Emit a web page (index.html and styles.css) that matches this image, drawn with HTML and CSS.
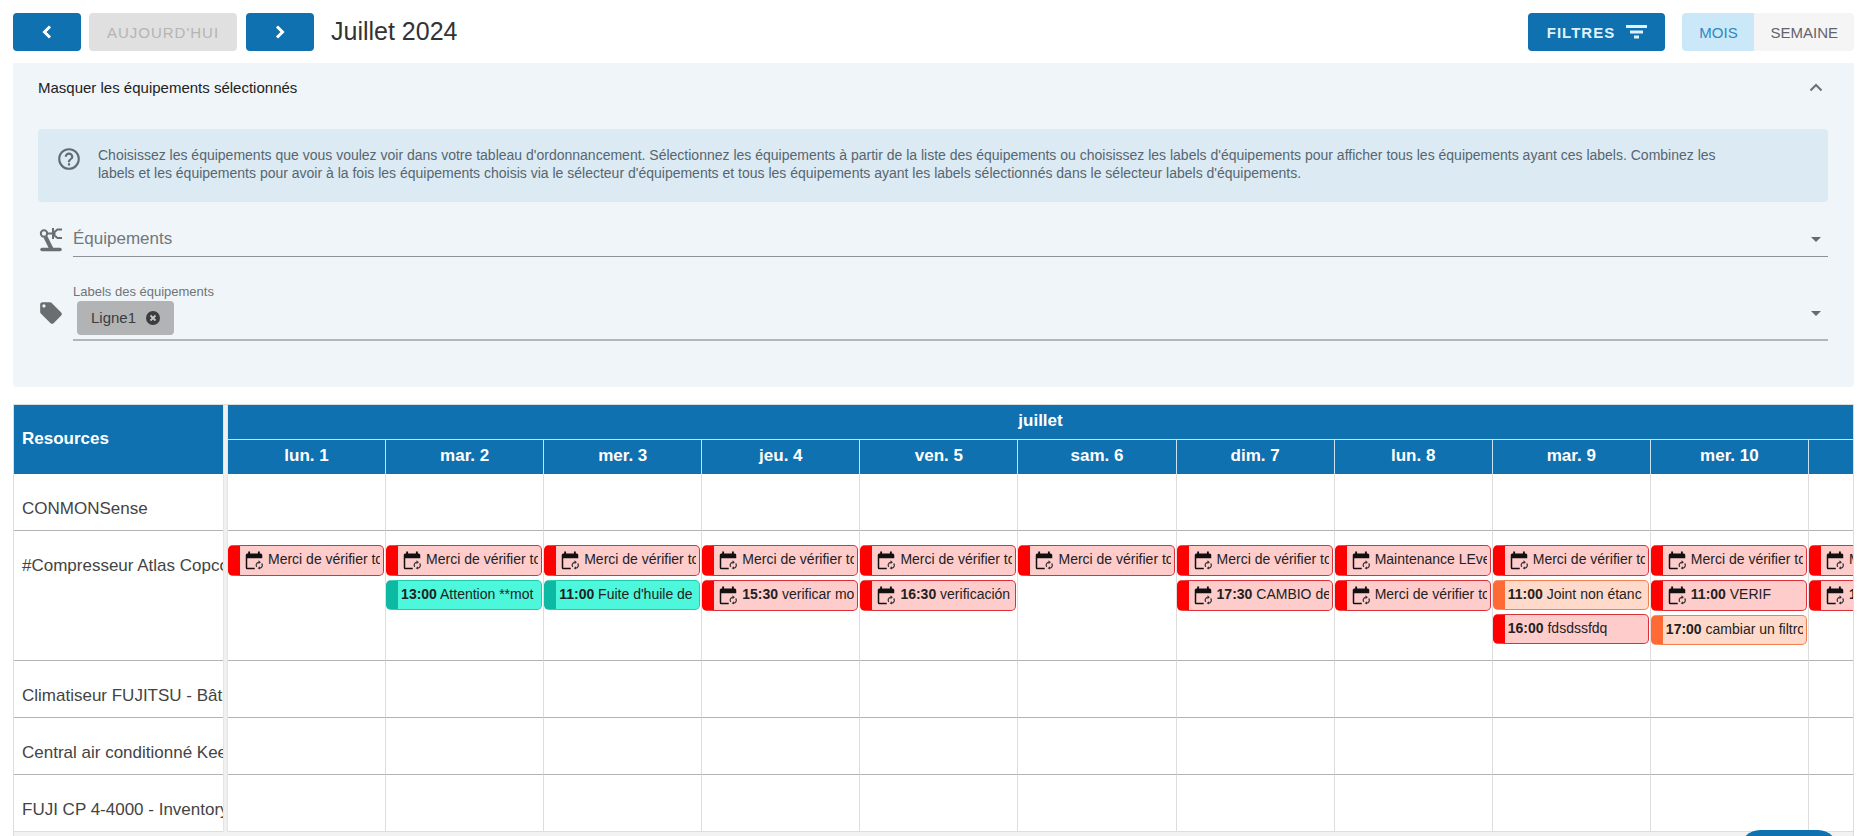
FILE: index.html
```html
<!DOCTYPE html>
<html lang="fr">
<head>
    <meta charset="UTF-8">
    <meta name="viewport" content="width=device-width, initial-scale=1.0">
    <title>Ordonnancement</title>
    <link rel="stylesheet" href="styles.css">
</head>
<body>
    <!-- shared icons -->
    <svg class="sprite" aria-hidden="true">
        <symbol id="calendar" viewBox="0 0 24 24">
            <path d="M5.5 0v4M18.500 0v4" fill="none" stroke="#111" stroke-width="2.500"/>
            <path d="M3 2.500h18a2 2 0 0 1 2 2V9H3v12.500h10V23.500H3a2 2 0 0 1-2-2V4.500a2 2 0 0 1 2-2z" fill="#111"/>
            <path d="M15.800 20.500a3.800 3.800 0 0 1 2.700-6.200M22.200 16a3.800 3.800 0 0 1-2.700 6.200" fill="none" stroke="#333" stroke-width="1.600"/>
            <path d="M18 11.500l3.200 2.800-3.200 2.700zM20 19.500l-3.200 2.700 3.200 1.800z" fill="#333"/>
        </symbol>
    </svg>

    <div class="toolbar">
        <button class="btn nav" aria-label="Précédent">
            <svg width="12" height="14" viewBox="0 0 12 14"><path d="M9 1.5L3.500 7L9 12.500" fill="none" stroke="#fff" stroke-width="3"/></svg>
        </button>
        <button class="btn today" disabled>AUJOURD'HUI</button>
        <button class="btn nav" aria-label="Suivant">
            <svg width="12" height="14" viewBox="0 0 12 14"><path d="M3 1.500L8.500 7L3 12.500" fill="none" stroke="#fff" stroke-width="3"/></svg>
        </button>
        <h1>Juillet 2024</h1>
        <button class="btn filters">FILTRES
            <svg width="21" height="16" viewBox="0 0 21 16"><path d="M0 2.500h21M4 8h13M8 13h5" fill="none" stroke="#dff1fc" stroke-width="3"/></svg>
        </button>
        <div class="views">
            <button class="active">MOIS</button>
            <button>SEMAINE</button>
        </div>
    </div>

    <section class="panel">
        <div class="panel-header">
            <span>Masquer les équipements sélectionnés</span>
            <button class="collapse" aria-label="Replier">
                <svg width="14" height="9" viewBox="0 0 14 9"><path d="M1.500 7.500L7 2l5.500 5.500" fill="none" stroke="#6b7073" stroke-width="2"/></svg>
            </button>
        </div>
        <div class="info">
            <svg width="26" height="26" viewBox="0 0 24 24" fill="#5f6c74"><path d="M11,18H13V16H11V18M12,2A10,10 0 0,0 2,12A10,10 0 0,0 12,22A10,10 0 0,0 22,12A10,10 0 0,0 12,2M12,20C7.59,20 4,16.41 4,12C4,7.59 7.59,4 12,4C16.41,4 20,7.59 20,12C20,16.41 16.41,20 12,20M12,6A4,4 0 0,0 8,10H10A2,2 0 0,1 12,8A2,2 0 0,1 14,10C14,12 11,11.75 11,15H13C13,12.75 16,12.5 16,10A4,4 0 0,0 12,6Z"/></svg>
            <p>Choisissez les équipements que vous voulez voir dans votre tableau d'ordonnancement. Sélectionnez les équipements à partir de la liste des équipements ou choisissez les labels d'équipements pour afficher tous les équipements ayant ces labels. Combinez les labels et les équipements pour avoir à la fois les équipements choisis via le sélecteur d'équipements et tous les équipements ayant les labels sélectionnés dans le sélecteur labels d'équipements.</p>
        </div>

        <div class="field">
            <!-- robot arm -->
            <svg class="field-icon" width="26" height="26" viewBox="0 0 26 26" fill="none" stroke="#6a6e70">
                <circle cx="6" cy="6.500" r="3.200" stroke-width="2"/>
                <path d="M9.500 6.500H15M24 2.500h-4.500L16.500 5v3.500l3 2.500H24M15 1v11" stroke-width="2"/>
                <path d="M7.500 10l6 12" stroke-width="4"/>
                <path d="M4 22.500h18" stroke-width="3.500" stroke-linecap="round"/>
            </svg>
            <div class="select">
                <label for="equipments">Équipements</label>
                <input type="text" id="equipments">
                <span class="arrow"></span>
            </div>
        </div>

        <div class="field labels">
            <svg class="field-icon" width="26" height="26" viewBox="0 0 24 24" fill="#6a6e70"><path d="M5.5,7A1.5,1.5 0 0,1 4,5.5A1.5,1.5 0 0,1 5.5,4A1.5,1.5 0 0,1 7,5.5A1.5,1.5 0 0,1 5.5,7M21.41,11.58L12.41,2.58C12.05,2.22 11.55,2 11,2H4C2.89,2 2,2.89 2,4V11C2,11.55 2.22,12.05 2.59,12.41L11.58,21.41C11.95,21.77 12.45,22 13,22C13.55,22 14.05,21.77 14.41,21.41L21.41,14.41C21.78,14.05 22,13.55 22,13C22,12.44 21.77,11.94 21.41,11.58Z"/></svg>
            <div class="select-box">
                <label for="labels">Labels des équipements</label>
                <div class="select">
                    <span class="chip">Ligne1
                        <button aria-label="Retirer Ligne1">
                            <svg width="14" height="14" viewBox="0 0 14 14"><circle cx="7" cy="7" r="7" fill="#3b3d3e"/><path d="M4.500 4.500l5 5M9.500 4.500l-5 5" stroke="#c4c6c7" stroke-width="1.800"/></svg>
                        </button>
                    </span>
                    <input type="text" id="labels">
                    <span class="arrow"></span>
                </div>
            </div>
        </div>
    </section>

    <div class="scheduler">
        <table>
            <colgroup>
                <col class="col-resource">
                <col class="col-divider">
                <col span="10">
                <col class="col-last">
            </colgroup>
            <thead>
                <tr>
                    <th rowspan="2" class="resource">Resources</th>
                    <td rowspan="2" class="divider"></td>
                    <th colspan="11" class="month">juillet</th>
                </tr>
                <tr>
                    <th>lun. 1</th>
                    <th>mar. 2</th>
                    <th>mer. 3</th>
                    <th>jeu. 4</th>
                    <th>ven. 5</th>
                    <th>sam. 6</th>
                    <th>dim. 7</th>
                    <th>lun. 8</th>
                    <th>mar. 9</th>
                    <th>mer. 10</th>
                    <th></th>
                </tr>
            </thead>
            <tbody>
                <tr>
                    <td class="resource">CONMONSense</td>
                    <td class="divider"></td>
                    <td></td><td></td><td></td><td></td><td></td><td></td><td></td><td></td><td></td><td></td><td></td>
                </tr>
                <tr class="busy">
                    <td class="resource">#Compresseur Atlas Copco</td>
                    <td class="divider"></td>
                    <td>
                        <div class="event red"><svg><use href="#calendar"/></svg><span>Merci de vérifier to</span></div>
                    </td>
                    <td>
                        <div class="event red"><svg><use href="#calendar"/></svg><span>Merci de vérifier to</span></div>
                        <div class="event teal"><span><b>13:00</b> Attention **mot</span></div>
                    </td>
                    <td>
                        <div class="event red"><svg><use href="#calendar"/></svg><span>Merci de vérifier to</span></div>
                        <div class="event teal"><span><b>11:00</b> Fuite d'huile de</span></div>
                    </td>
                    <td>
                        <div class="event red"><svg><use href="#calendar"/></svg><span>Merci de vérifier to</span></div>
                        <div class="event red"><svg><use href="#calendar"/></svg><span><b>15:30</b> verificar mo</span></div>
                    </td>
                    <td>
                        <div class="event red"><svg><use href="#calendar"/></svg><span>Merci de vérifier to</span></div>
                        <div class="event red"><svg><use href="#calendar"/></svg><span><b>16:30</b> verificación</span></div>
                    </td>
                    <td>
                        <div class="event red"><svg><use href="#calendar"/></svg><span>Merci de vérifier to</span></div>
                    </td>
                    <td>
                        <div class="event red"><svg><use href="#calendar"/></svg><span>Merci de vérifier to</span></div>
                        <div class="event red"><svg><use href="#calendar"/></svg><span><b>17:30</b> CAMBIO de</span></div>
                    </td>
                    <td>
                        <div class="event red"><svg><use href="#calendar"/></svg><span>Maintenance LEve</span></div>
                        <div class="event red"><svg><use href="#calendar"/></svg><span>Merci de vérifier to</span></div>
                    </td>
                    <td>
                        <div class="event red"><svg><use href="#calendar"/></svg><span>Merci de vérifier to</span></div>
                        <div class="event orange"><span><b>11:00</b> Joint non étanc</span></div>
                        <div class="event red plain"><span><b>16:00</b> fdsdssfdq</span></div>
                    </td>
                    <td>
                        <div class="event red"><svg><use href="#calendar"/></svg><span>Merci de vérifier to</span></div>
                        <div class="event red"><svg><use href="#calendar"/></svg><span><b>11:00</b> VERIF</span></div>
                        <div class="event orange"><span><b>17:00</b> cambiar un filtro</span></div>
                    </td>
                    <td>
                        <div class="event red cut"><svg><use href="#calendar"/></svg><span>M</span></div>
                        <div class="event red cut"><svg><use href="#calendar"/></svg><span><b>1</b></span></div>
                    </td>
                </tr>
                <tr>
                    <td class="resource">Climatiseur FUJITSU - Bâti</td>
                    <td class="divider"></td>
                    <td></td><td></td><td></td><td></td><td></td><td></td><td></td><td></td><td></td><td></td><td></td>
                </tr>
                <tr>
                    <td class="resource">Central air conditionné Kee</td>
                    <td class="divider"></td>
                    <td></td><td></td><td></td><td></td><td></td><td></td><td></td><td></td><td></td><td></td><td></td>
                </tr>
                <tr>
                    <td class="resource">FUJI CP 4-4000 - Inventory</td>
                    <td class="divider"></td>
                    <td></td><td></td><td></td><td></td><td></td><td></td><td></td><td></td><td></td><td></td><td></td>
                </tr>
            </tbody>
        </table>
    </div>

    <button class="fab" aria-label="Aide"></button>
</body>
</html>
```
FILE: styles.css
```css
* {
    box-sizing: border-box;
}
body {
    margin: 0;
    padding: 13px 5px 0 13px;
    font-family: "Liberation Sans", Arial, sans-serif;
    font-size: 14px;
    color: #333;
    background: #fff;
    height: 100vh;
    overflow: hidden;
}
button {
    font-family: inherit;
    border: none;
    padding: 0;
    cursor: pointer;
}
.sprite {
    display: none;
}

/* Toolbar */
.toolbar {
    display: flex;
    align-items: center;
    height: 38px;
    margin-bottom: 12px;
}
.btn {
    display: flex;
    align-items: center;
    justify-content: center;
    height: 38px;
    border-radius: 4px;
    background: #0f71b0;
    color: #fff;
    font-size: 15px;
    letter-spacing: 1px;
}
.nav {
    width: 68px;
}
.today {
    width: 148px;
    margin: 0 9px 0 8px;
    background: #e0e0e0;
    color: #b4b4b4;
}
.toolbar h1 {
    flex: 1;
    margin: 0 0 0 17px;
    font-size: 25px;
    line-height: 28px;
    padding-bottom: 2px;
    font-weight: normal;
    color: #333;
}
.filters {
    width: 137px;
    gap: 11px;
    margin-right: 17px;
    font-weight: bold;
    color: #dff1fc;
}
.views {
    display: flex;
    height: 38px;
    border-radius: 4px;
    overflow: hidden;
}
.views button {
    min-width: 72px;
    padding: 0 16px;
    font-size: 15px;
    color: #62636c;
    background: #f5f5f5;
}
.views .active {
    color: #2f87c0;
    background: #cbe8f9;
}

/* Equipment filter panel */
.panel {
    padding: 0 26px 46px 25px;
    border-radius: 0 0 4px 4px;
    background: #eff5f9;
}
.panel-header {
    display: flex;
    align-items: center;
    justify-content: space-between;
    height: 48px;
    margin-bottom: 18px;
    font-size: 15px;
    color: #222;
}
.collapse {
    display: flex;
    margin-right: 5px;
    background: none;
}
.info {
    display: flex;
    gap: 16px;
    height: 73px;
    padding: 17px 95px 0 18px;
    border-radius: 4px;
    background: #dceaf4;
    color: #56666f;
}
.info svg {
    flex: none;
}
.info p {
    margin: 0;
    line-height: 18px;
}
.field {
    display: flex;
    align-items: center;
    gap: 9px;
    margin-top: 20px;
}
.field-icon {
    flex: none;
}
.select {
    flex: 1;
    display: flex;
    align-items: center;
    height: 35px;
    padding-right: 7px;
    border-bottom: 1px solid #8d9295;
    font-size: 17px;
    color: #72777a;
}
.select input {
    flex: 1;
    min-width: 0;
    border: none;
    outline: none;
    background: none;
}
.arrow {
    border: 5px solid transparent;
    border-top-color: #666b6e;
    border-bottom: none;
}
.labels {
    margin-top: 27px;
}
.select-box {
    flex: 1;
    font-size: 13px;
    line-height: 16px;
    color: #6f7477;
}
.select-box label {
    display: block;
}
.select-box .select {
    height: 41px;
    padding-bottom: 4px;
    border-bottom: 2px solid #b2b6b8;
}
.select-box .arrow {
    margin-bottom: 8px;
}
.chip {
    display: flex;
    align-items: center;
    gap: 10px;
    height: 34px;
    margin-left: 4px;
    padding: 0 14px;
    border-radius: 4px;
    background: #b1b3b4;
    color: #3b3d3e;
    font-size: 15px;
}
.chip button {
    display: flex;
    background: none;
}

/* Timeline */
.scheduler {
    margin-top: 17px;
    border: 1px solid #ddd;
    background: #f2f2f2;
    padding-bottom: 20px;
}
table {
    width: 100%;
    table-layout: fixed;
    border-spacing: 0;
    background: #fff;
}
.col-resource {
    width: 209px;
}
.col-divider {
    width: 5px;
}
.col-last {
    width: 44px;
}
th {
    height: 34px;
    padding: 0 0 2px;
    border-right: 1px solid #c7e3f3;
    background: #0f71b0;
    color: #fff;
    font-size: 17px;
}
th:last-child {
    border-right: none;
}
th.month {
    height: 35px;
    border-bottom: 1px solid #c7e3f3;
}
th.resource {
    padding-left: 8px;
    border-right: none;
    text-align: left;
}
td {
    height: 57px;
    padding: 0;
    vertical-align: top;
    border-right: 1px solid #ddd;
    border-bottom: 1px solid #b4b4b4;
    overflow: hidden;
}
td:last-child {
    border-right: none;
}
td.resource {
    padding: 25px 0 0 8px;
    border-right: none;
    font-size: 17px;
    line-height: 20px;
    white-space: nowrap;
    color: #444;
}
td.divider {
    height: auto;
    border: 1px solid #e4e4e4;
    border-width: 0 1px;
    background: #f0f0f0;
}
tr:last-child td {
    border-bottom-color: #ddd;
}
.busy td {
    height: 130px;
    padding-top: 14px;
}
.busy td.resource {
    padding-top: 25px;
}
.event {
    display: flex;
    align-items: center;
    height: 31px;
    margin: 0 1px 4px 0;
    padding: 0 3px;
    border: 1px solid;
    border-left-width: 12px;
    border-radius: 5px;
    color: #222;
    white-space: nowrap;
}
.event span {
    flex: 1;
    padding-bottom: 3px;
    overflow: hidden;
}
.event svg {
    flex: none;
    width: 18px;
    height: 19px;
    margin: 0 5px 0 2px;
}
.cut {
    width: 157px;
}
.red {
    background: #ffcccc;
    border-color: #dc3038;
    border-left-color: #f00;
}
.teal {
    height: 30px;
    background: #4df7dc;
    border-color: #25c9b0;
    border-left-color: #0cb9a2;
}
.orange {
    height: 30px;
    background: #ffd9c9;
    border-color: #f08050;
    border-left-color: #ff6a35;
}
.plain {
    height: 30px;
}

/* Floating button, mostly below the fold */
.fab {
    position: fixed;
    right: 21px;
    bottom: -34px;
    width: 98px;
    height: 40px;
    border-radius: 20px;
    background: #0f71b0;
}
```
